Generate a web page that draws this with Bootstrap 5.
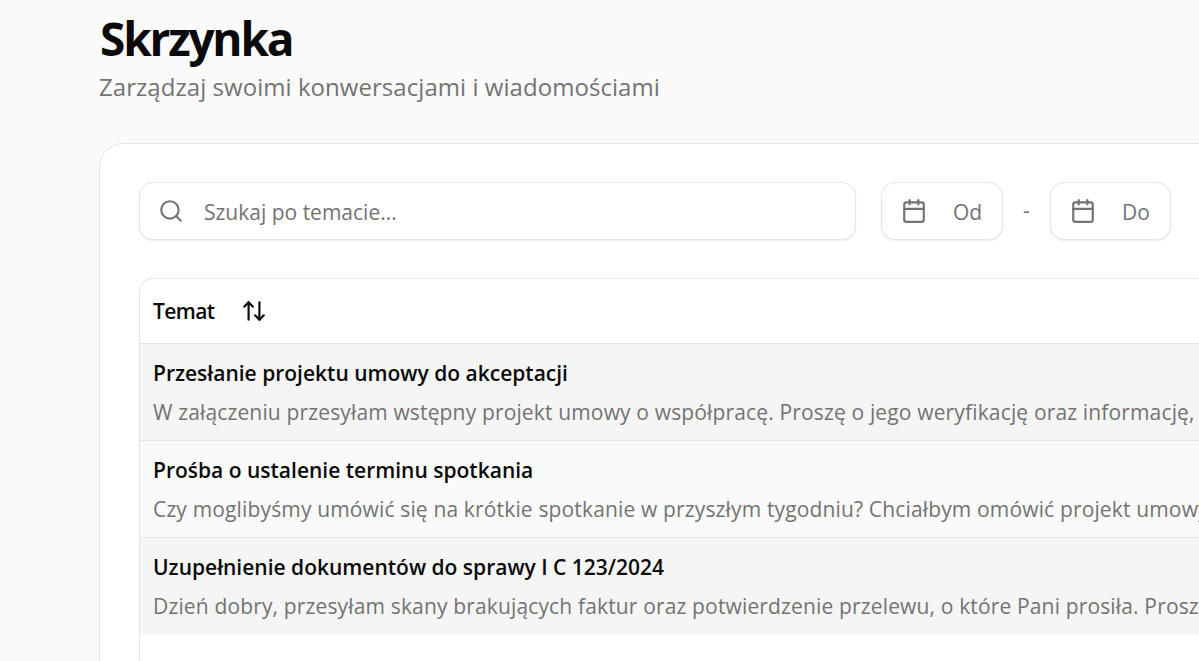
<!DOCTYPE html>
<html lang="pl">
<head>
  <meta charset="UTF-8" />
  <title>Skrzynka</title>
  <link href="https://cdn.jsdelivr.net/npm/bootstrap@5.3.3/dist/css/bootstrap.min.css" rel="stylesheet">
  <style>
    html, body { height: 100%; overflow: hidden; }
    body {
      background-color: #fafafa;
      font-family: "Open Sans", "Noto Sans", sans-serif;
      color: #0a0a0a;
    }
    .inbox-page { padding: 0 0 0 99px; width: 1500px; }
    .inbox-title {
      font-size: 46px;
      font-weight: 700;
      letter-spacing: -2.2px;
      line-height: 56px;
      margin: 10px 0 0 1px;
    }
    .inbox-sub {
      font-size: 24px;
      line-height: 32px;
      color: #737373;
      margin: 5px 0 40px 0;
      letter-spacing: 0.05px;
    }
    .inbox-card {
      background: #fff;
      border: 1px solid #e5e5e5;
      border-radius: 24px;
      padding: 38px 39px;
      height: 600px;
    }
    .filter-row { width: 1032px; margin-bottom: 38px; }
    .filter-box {
      height: 58px;
      border: 1px solid #e5e5e5;
      border-radius: 14px;
      background: #fff;
      box-shadow: 0 1px 2px rgba(0,0,0,.08);
      color: #737373;
      font-size: 21px;
      line-height: 30px;
    }
    .filter-box span { margin-top: 2px; }
    .filter-search { width: 717px; padding-left: 18px; gap: 20px; margin-right: 25px; }
    .filter-date { width: 122px; padding-left: 19px; gap: 26px; }
    .filter-date-to { width: 121px; }
    .filter-dash { width: 47px; text-align: center; color: #737373; font-size: 21px; }
    .mail-table {
      border: 1px solid #e5e5e5;
      border-right: 0;
      border-bottom: 0;
      border-radius: 14px 0 0 0;
      height: 460px;
    }
    .mail-head {
      height: 65px;
      padding-left: 13px;
      font-size: 21px;
      font-weight: 600;
      gap: 26px;
      border-bottom: 1px solid #e5e5e5;
    }
    .mail-head span { margin-top: 2px; letter-spacing: -0.6px; }
    .mail-row {
      height: 97px;
      padding: 14px 0 0 13px;
      border-bottom: 1px solid #e5e5e5;
      white-space: nowrap;
      overflow: hidden;
      background: #f5f5f5;
    }
    .mail-row.alt { background: #fafafa; }
    .mail-row.last { height: 96px; border-bottom: 0; }
    .mail-subject { font-size: 21px; font-weight: 600; line-height: 30px; }
    .mail-preview { font-size: 21px; line-height: 30px; color: #737373; margin-top: 9px; letter-spacing: 0.15px; }
  </style>
</head>
<body>
  <div class="inbox-page">
    <h1 class="inbox-title">Skrzynka</h1>
    <p class="inbox-sub">Zarządzaj swoimi konwersacjami i wiadomościami</p>

    <div class="inbox-card">
      <div class="filter-row d-flex align-items-center">
        <div class="filter-box filter-search d-flex align-items-center">
          <svg width="26" height="26" viewBox="0 0 24 24" fill="none" stroke="#737373" stroke-width="2" stroke-linecap="round" stroke-linejoin="round"><circle cx="11" cy="11" r="8"/><path d="m21 21-4.3-4.3"/></svg>
          <span>Szukaj po temacie...</span>
        </div>
        <div class="filter-box filter-date d-flex align-items-center">
          <svg width="26" height="26" viewBox="0 0 24 24" fill="none" stroke="#737373" stroke-width="2" stroke-linecap="round" stroke-linejoin="round"><path d="M8 2v4"/><path d="M16 2v4"/><rect x="3" y="4" width="18" height="18" rx="2"/><path d="M3 10h18"/></svg>
          <span>Od</span>
        </div>
        <div class="filter-dash">-</div>
        <div class="filter-box filter-date filter-date-to d-flex align-items-center">
          <svg width="26" height="26" viewBox="0 0 24 24" fill="none" stroke="#737373" stroke-width="2" stroke-linecap="round" stroke-linejoin="round"><path d="M8 2v4"/><path d="M16 2v4"/><rect x="3" y="4" width="18" height="18" rx="2"/><path d="M3 10h18"/></svg>
          <span>Do</span>
        </div>
      </div>

      <div class="mail-table">
        <div class="mail-head d-flex align-items-center">
          <span>Temat</span>
          <svg width="26" height="26" viewBox="0 0 24 24" fill="none" stroke="#0a0a0a" stroke-width="2" stroke-linecap="round" stroke-linejoin="round"><path d="m21 16-4 4-4-4"/><path d="M17 20V4"/><path d="m3 8 4-4 4 4"/><path d="M7 4v16"/></svg>
        </div>
        <div class="mail-row">
          <div class="mail-subject">Przesłanie projektu umowy do akceptacji</div>
          <div class="mail-preview">W załączeniu przesyłam wstępny projekt umowy o współpracę. Proszę o jego weryfikację oraz informację, czy</div>
        </div>
        <div class="mail-row alt">
          <div class="mail-subject">Prośba o ustalenie terminu spotkania</div>
          <div class="mail-preview">Czy moglibyśmy umówić się na krótkie spotkanie w przyszłym tygodniu? Chciałbym omówić projekt umowy</div>
        </div>
        <div class="mail-row last">
          <div class="mail-subject">Uzupełnienie dokumentów do sprawy I C 123/2024</div>
          <div class="mail-preview">Dzień dobry, przesyłam skany brakujących faktur oraz potwierdzenie przelewu, o które Pani prosiła. Proszę</div>
        </div>
      </div>
    </div>
  </div>
  <script src="https://cdn.jsdelivr.net/npm/bootstrap@5.3.3/dist/js/bootstrap.bundle.min.js"></script>
</body>
</html>
